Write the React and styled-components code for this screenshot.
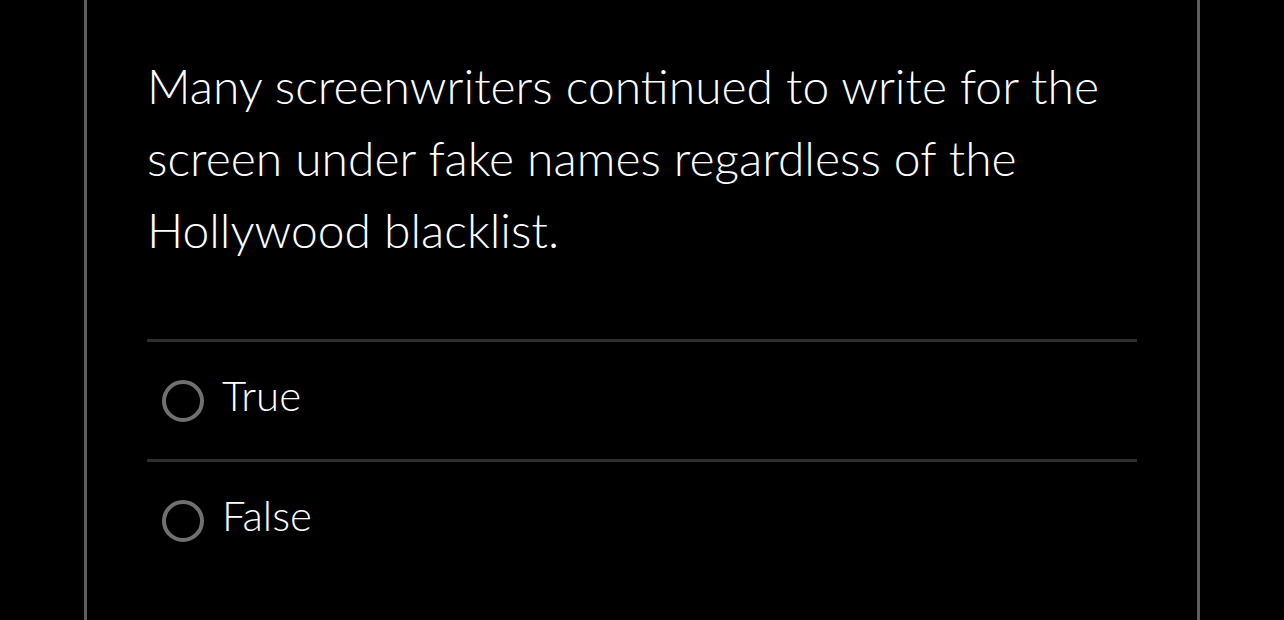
import React from "react";
import styled, { createGlobalStyle } from "styled-components";

const GlobalStyle = createGlobalStyle`
  html, body {
    margin: 0;
    padding: 0;
    background: #000;
  }
  body {
    font-family: Lato, "Open Sans", sans-serif;
    color: #fff;
  }
`;

const Page = styled.div`
  height: 620px;
  overflow: hidden;
  padding: 0 84px;
  background: #000;
`;

const Card = styled.section`
  min-height: 700px;
  border-left: 3px solid #5e5e5e;
  border-right: 3px solid #5e5e5e;
  padding: 50px 60px 40px;
`;

const Question = styled.p`
  margin: 0 0 73px;
  font-size: 48px;
  font-weight: 300;
  line-height: 72px;
  color: #fff;
`;

const Options = styled.div`
  display: flex;
  flex-direction: column;
`;

const Option = styled.label`
  display: flex;
  align-items: center;
  gap: 18px;
  height: 117px;
  padding-left: 15px;
  border-top: 3px solid #2e2e2e;
  cursor: pointer;
`;

const Radio = styled.span`
  flex: none;
  width: 34px;
  height: 34px;
  border-radius: 50%;
  border: 4px solid #707070;
`;

const OptionText = styled.span`
  margin-bottom: 11px;
  font-size: 42px;
  font-weight: 300;
  color: #fff;
`;

const answers = ["True", "False"];

export default function App() {
  return (
    <>
      <GlobalStyle />
      <Page>
        <Card>
          <Question>
            Many screenwriters continued to write for the screen under fake
            names regardless of the Hollywood blacklist.
          </Question>
          <Options>
            {answers.map((a) => (
              <Option key={a}>
                <Radio />
                <OptionText>{a}</OptionText>
              </Option>
            ))}
          </Options>
        </Card>
      </Page>
    </>
  );
}
